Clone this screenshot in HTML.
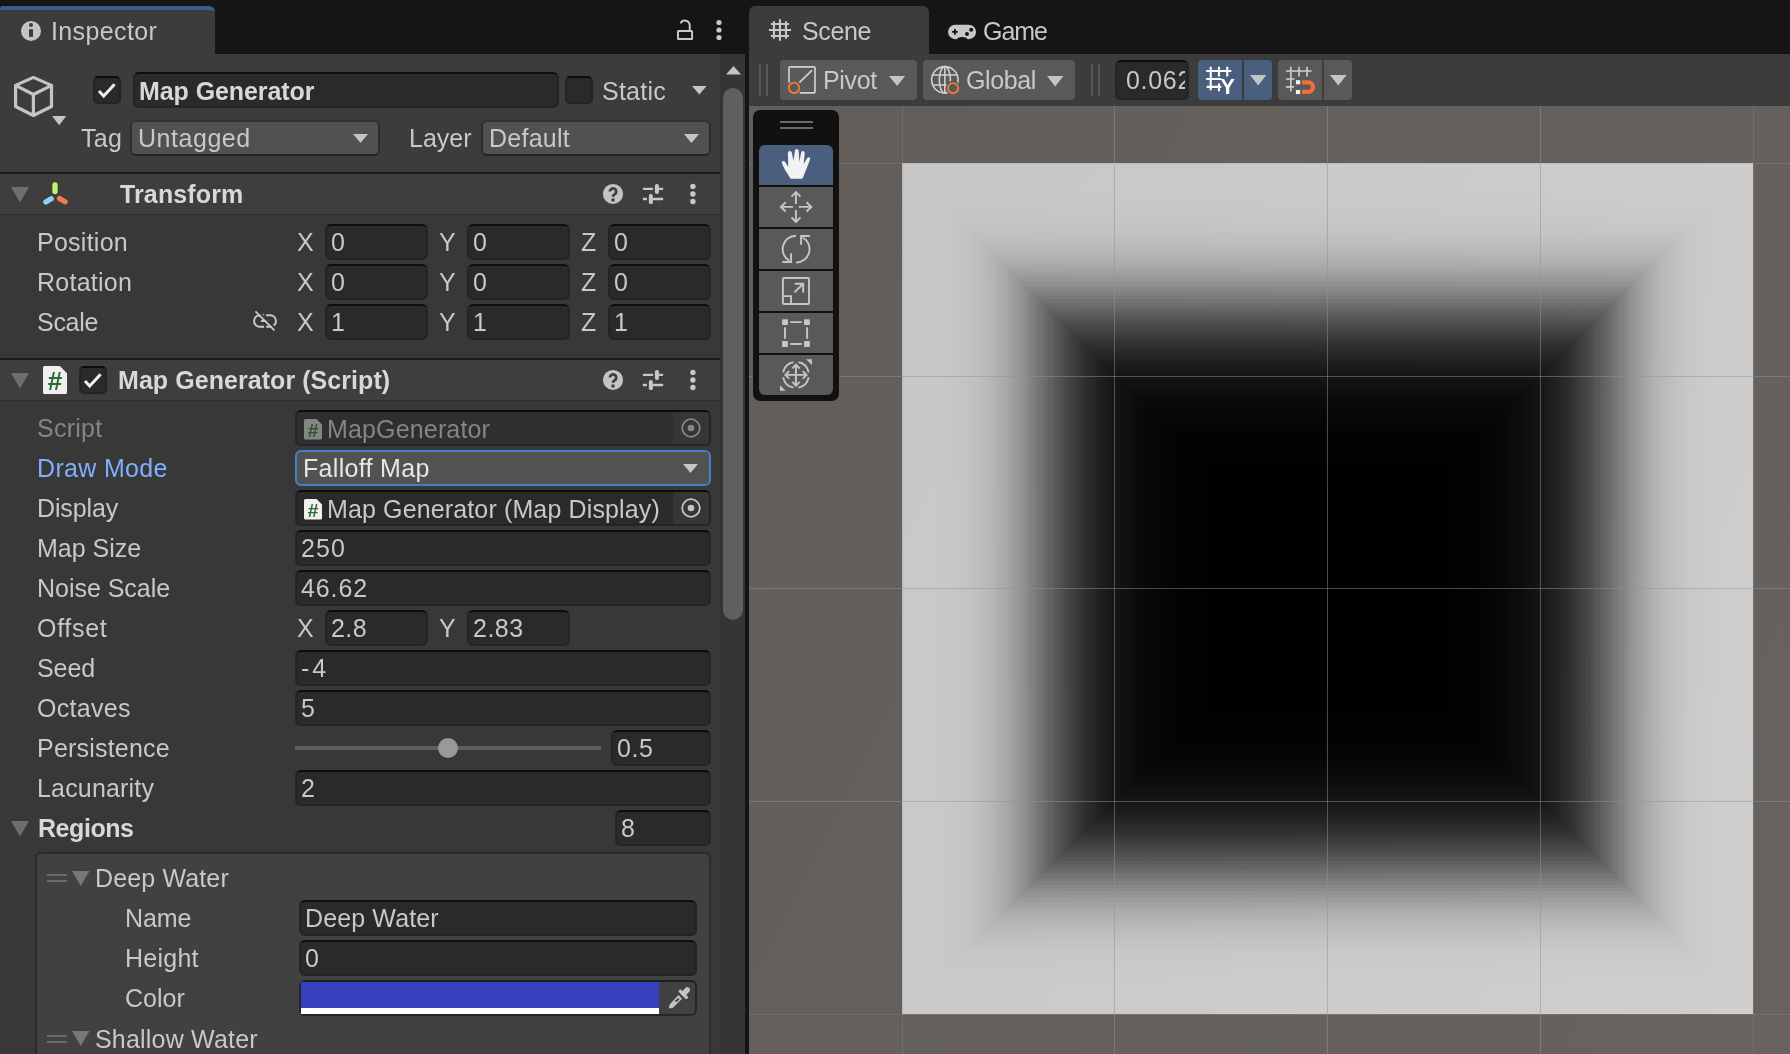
<!DOCTYPE html>
<html><head><meta charset="utf-8"><title>Unity</title>
<style>
html,body{margin:0;padding:0;background:#151515;width:1790px;height:1054px;overflow:hidden;}
body{width:1790px;height:1054px;position:relative;overflow:hidden;font-family:"Liberation Sans",sans-serif;}
div,span,svg{position:absolute;box-sizing:border-box;}
.t{white-space:nowrap;line-height:30px;height:30px;}
.f{border:2px solid #242424;border-top-color:#0d0d0d;}
.dd{background:#515151;border:2px solid #2d2d2d;border-top-color:#323232;border-bottom-color:#242424;border-radius:6px;}
.a{overflow:visible;}
#w{left:0;top:0;width:1790px;height:1054px;will-change:transform;overflow:hidden;}
</style></head><body><div id="w">
<div class="" style="left:0px;top:6px;width:215px;height:48px;background:#3c3c3c;border-radius:3px 6px 0 0;"></div>
<div style="left:0;top:6px;width:215px;height:10px;border-radius:3px 6px 0 0;border-top:4px solid #3b5f8d;"></div>
<div class="" style="left:0px;top:54px;width:745px;height:1000px;background:#383838;"></div>
<div class="" style="left:0px;top:54px;width:720px;height:118px;background:#3c3c3c;"></div>
<svg class="a" style="left:21px;top:21px" width="20" height="20" viewBox="0 0 20 20"><circle cx="10" cy="10" r="10" fill="#c4c4c4"/><rect x="8" y="8.2" width="4" height="7.7" fill="#3c3c3c"/><circle cx="10" cy="3.9" r="2" fill="#3c3c3c"/></svg>
<span class="t" style="left:51px;top:16px;font-size:25px;color:#c8c8c8;font-weight:400;letter-spacing:0.385px;">Inspector</span>
<svg class="a" style="left:660px;top:10px" width="80" height="40" viewBox="0 0 1790.0 895.0"><g fill="none" stroke="#c8c8c8" stroke-width="44"><path d="M665 455 V345 A108 108 0 0 0 459 300"/><rect x="402" y="472" width="316" height="178" rx="14"/></g><g fill="#c8c8c8"><circle cx="1320" cy="280" r="58"/><circle cx="1320" cy="448" r="58"/><circle cx="1320" cy="615" r="58"/></g></svg>
<div class="" style="left:720px;top:54px;width:25px;height:1000px;background:#353535;"></div>
<svg class="a" style="left:725.5px;top:65.5px" width="15" height="8.5" viewBox="0 0 15 8.5"><polygon points="0,8.5 7.5,0 15,8.5" fill="#c4c4c4"/></svg>
<div class="" style="left:723px;top:88px;width:20px;height:532px;background:#5f5f5f;border-radius:10px;"></div>
<svg class="a" style="left:0px;top:60px" width="70" height="70" viewBox="0 0 70 70"><path d="M33.4 17.4 L51.5 25.4 V46.5 L33.4 55.5 L15.6 46.5 V25.4 Z M15.6 25.4 L33.4 34.5 L51.5 25.4 M33.4 34.5 V55.5" fill="none" stroke="#c4c4c4" stroke-width="3.2" stroke-linejoin="round"/></svg>
<svg class="a" style="left:51.7px;top:115.8px" width="14.3" height="9.2" viewBox="0 0 14.3 9.2"><polygon points="0,0 14.3,0 7.15,9.2" fill="#c4c4c4"/></svg>
<div class="f" style="left:93px;top:76px;width:28px;height:28px;background:#2a2a2a;border-radius:5px"></div>
<svg class="a" style="left:93px;top:76px" width="28" height="28" viewBox="0 0 28 28"><path d="M6 14.9 L10.7 20 L21.6 8.3" fill="none" stroke="#efefef" stroke-width="3"/></svg>
<div class="f" style="left:133px;top:72px;width:426px;height:36px;background:#2a2a2a;border-radius:6px"></div>
<span class="t" style="left:139px;top:76px;font-size:25px;color:#d8d8d8;font-weight:700;letter-spacing:-0.079px;">Map Generator</span>
<div class="f" style="left:565px;top:76px;width:28px;height:28px;background:#2a2a2a;border-radius:5px"></div>
<span class="t" style="left:602px;top:76px;font-size:25px;color:#c8c8c8;font-weight:400;letter-spacing:0.247px;">Static</span>
<svg class="a" style="left:692px;top:86px" width="14.6" height="8.6" viewBox="0 0 14.6 8.6"><polygon points="0,0 14.6,0 7.3,8.6" fill="#c4c4c4"/></svg>
<span class="t" style="left:81px;top:123px;font-size:25px;color:#c8c8c8;font-weight:400;letter-spacing:0.352px;">Tag</span>
<div class="dd" style="left:130px;top:120px;width:250px;height:36px;"></div>
<svg class="a" style="left:353.0px;top:134.0px" width="15" height="9" viewBox="0 0 15 9"><polygon points="0,0 15,0 7.5,9" fill="#c4c4c4"/></svg>
<span class="t" style="left:138px;top:123px;font-size:25px;color:#c8c8c8;font-weight:400;letter-spacing:0.541px;">Untagged</span>
<span class="t" style="left:409px;top:123px;font-size:25px;color:#c8c8c8;font-weight:400;letter-spacing:-0.005px;">Layer</span>
<div class="dd" style="left:481px;top:120px;width:230px;height:36px;"></div>
<svg class="a" style="left:684.0px;top:134.0px" width="15" height="9" viewBox="0 0 15 9"><polygon points="0,0 15,0 7.5,9" fill="#c4c4c4"/></svg>
<span class="t" style="left:489px;top:123px;font-size:25px;color:#c8c8c8;font-weight:400;letter-spacing:0.262px;">Default</span>
<div class="" style="left:0px;top:172px;width:720px;height:2px;background:#1a1a1a;"></div>
<div class="" style="left:0px;top:174px;width:720px;height:40px;background:#3e3e3e;"></div>
<div class="" style="left:0px;top:214px;width:720px;height:1px;background:#2f2f2f;"></div>
<svg class="a" style="left:11px;top:186.5px" width="18" height="15.5" viewBox="0 0 18 15.5"><polygon points="0,0 18,0 9.0,15.5" fill="#6e6e6e"/></svg>
<svg class="a" style="left:590px;top:174px" width="120" height="40" viewBox="0 0 1790.0 596.7"><circle cx="343" cy="298" r="150" fill="#c4c4c4"/><path d="M297 262 a47 47 0 1 1 73 39 c-19 13 -27 22 -27 40" fill="none" stroke="#3e3e3e" stroke-width="42"/><circle cx="343" cy="387" r="27" fill="#3e3e3e"/><g fill="#c8c8c8"><rect x="790" y="205" width="150" height="34" rx="6"/><rect x="1028" y="205" width="62" height="34" rx="6"/><rect x="968" y="150" width="60" height="148" rx="28"/><rect x="790" y="356" width="60" height="34" rx="6"/><rect x="938" y="356" width="152" height="34" rx="6"/><rect x="878" y="300" width="60" height="148" rx="28"/><circle cx="1535" cy="185" r="40"/><circle cx="1535" cy="298" r="40"/><circle cx="1535" cy="410" r="40"/></g></svg>
<svg class="a" style="left:0px;top:170px" width="100" height="50" viewBox="0 0 1790.0 895.0"><g stroke-linecap="round" fill="none"><path d="M985 265 V385" stroke="#bbf56a" stroke-width="95"/><path d="M820 572 L915 515" stroke="#8fd0fa" stroke-width="95"/><path d="M1065 512 L1165 568" stroke="#f07d4a" stroke-width="95"/></g></svg>
<span class="t" style="left:120px;top:179px;font-size:25px;color:#d8d8d8;font-weight:700;letter-spacing:0.125px;">Transform</span>
<span class="t" style="left:37px;top:227px;font-size:25px;color:#c8c8c8;font-weight:400;letter-spacing:0.255px;">Position</span>
<span class="t" style="left:297px;top:227px;font-size:25px;color:#c8c8c8;font-weight:400;letter-spacing:0.000px;">X</span>
<div class="f" style="left:325px;top:224px;width:103px;height:36px;background:#2a2a2a;border-radius:6px"></div>
<span class="t" style="left:331px;top:227px;font-size:25px;color:#c8c8c8;font-weight:400;letter-spacing:0.000px;">0</span>
<span class="t" style="left:439px;top:227px;font-size:25px;color:#c8c8c8;font-weight:400;letter-spacing:0.000px;">Y</span>
<div class="f" style="left:467px;top:224px;width:103px;height:36px;background:#2a2a2a;border-radius:6px"></div>
<span class="t" style="left:473px;top:227px;font-size:25px;color:#c8c8c8;font-weight:400;letter-spacing:0.000px;">0</span>
<span class="t" style="left:581px;top:227px;font-size:25px;color:#c8c8c8;font-weight:400;letter-spacing:0.000px;">Z</span>
<div class="f" style="left:608px;top:224px;width:103px;height:36px;background:#2a2a2a;border-radius:6px"></div>
<span class="t" style="left:614px;top:227px;font-size:25px;color:#c8c8c8;font-weight:400;letter-spacing:0.000px;">0</span>
<span class="t" style="left:37px;top:267px;font-size:25px;color:#c8c8c8;font-weight:400;letter-spacing:0.258px;">Rotation</span>
<span class="t" style="left:297px;top:267px;font-size:25px;color:#c8c8c8;font-weight:400;letter-spacing:0.000px;">X</span>
<div class="f" style="left:325px;top:264px;width:103px;height:36px;background:#2a2a2a;border-radius:6px"></div>
<span class="t" style="left:331px;top:267px;font-size:25px;color:#c8c8c8;font-weight:400;letter-spacing:0.000px;">0</span>
<span class="t" style="left:439px;top:267px;font-size:25px;color:#c8c8c8;font-weight:400;letter-spacing:0.000px;">Y</span>
<div class="f" style="left:467px;top:264px;width:103px;height:36px;background:#2a2a2a;border-radius:6px"></div>
<span class="t" style="left:473px;top:267px;font-size:25px;color:#c8c8c8;font-weight:400;letter-spacing:0.000px;">0</span>
<span class="t" style="left:581px;top:267px;font-size:25px;color:#c8c8c8;font-weight:400;letter-spacing:0.000px;">Z</span>
<div class="f" style="left:608px;top:264px;width:103px;height:36px;background:#2a2a2a;border-radius:6px"></div>
<span class="t" style="left:614px;top:267px;font-size:25px;color:#c8c8c8;font-weight:400;letter-spacing:0.000px;">0</span>
<span class="t" style="left:37px;top:307px;font-size:25px;color:#c8c8c8;font-weight:400;letter-spacing:-0.281px;">Scale</span>
<span class="t" style="left:297px;top:307px;font-size:25px;color:#c8c8c8;font-weight:400;letter-spacing:0.000px;">X</span>
<div class="f" style="left:325px;top:304px;width:103px;height:36px;background:#2a2a2a;border-radius:6px"></div>
<span class="t" style="left:331px;top:307px;font-size:25px;color:#c8c8c8;font-weight:400;letter-spacing:0.000px;">1</span>
<span class="t" style="left:439px;top:307px;font-size:25px;color:#c8c8c8;font-weight:400;letter-spacing:0.000px;">Y</span>
<div class="f" style="left:467px;top:304px;width:103px;height:36px;background:#2a2a2a;border-radius:6px"></div>
<span class="t" style="left:473px;top:307px;font-size:25px;color:#c8c8c8;font-weight:400;letter-spacing:0.000px;">1</span>
<span class="t" style="left:581px;top:307px;font-size:25px;color:#c8c8c8;font-weight:400;letter-spacing:0.000px;">Z</span>
<div class="f" style="left:608px;top:304px;width:103px;height:36px;background:#2a2a2a;border-radius:6px"></div>
<span class="t" style="left:614px;top:307px;font-size:25px;color:#c8c8c8;font-weight:400;letter-spacing:0.000px;">1</span>
<svg class="a" style="left:240px;top:300px" width="80" height="45" viewBox="0 0 1790.0 1006.9"><g fill="none" stroke="#c8c8c8" stroke-width="45"><path d="M540 340 H445 a130 130 0 0 0 0 260 H540"/><path d="M585 340 H675 a130 130 0 0 1 0 260 H585"/><path d="M470 470 H645"/></g><path d="M375 225 L800 650" stroke="#383838" stroke-width="44"/><path d="M345 255 L770 680" stroke="#c8c8c8" stroke-width="40"/></svg>
<div class="" style="left:0px;top:358px;width:720px;height:2px;background:#1a1a1a;"></div>
<div class="" style="left:0px;top:360px;width:720px;height:40px;background:#3e3e3e;"></div>
<div class="" style="left:0px;top:400px;width:720px;height:1px;background:#2f2f2f;"></div>
<svg class="a" style="left:11px;top:372.5px" width="18" height="15.5" viewBox="0 0 18 15.5"><polygon points="0,0 18,0 9.0,15.5" fill="#6e6e6e"/></svg>
<svg class="a" style="left:590px;top:360px" width="120" height="40" viewBox="0 0 1790.0 596.7"><circle cx="343" cy="298" r="150" fill="#c4c4c4"/><path d="M297 262 a47 47 0 1 1 73 39 c-19 13 -27 22 -27 40" fill="none" stroke="#3e3e3e" stroke-width="42"/><circle cx="343" cy="387" r="27" fill="#3e3e3e"/><g fill="#c8c8c8"><rect x="790" y="205" width="150" height="34" rx="6"/><rect x="1028" y="205" width="62" height="34" rx="6"/><rect x="968" y="150" width="60" height="148" rx="28"/><rect x="790" y="356" width="60" height="34" rx="6"/><rect x="938" y="356" width="152" height="34" rx="6"/><rect x="878" y="300" width="60" height="148" rx="28"/><circle cx="1535" cy="185" r="40"/><circle cx="1535" cy="298" r="40"/><circle cx="1535" cy="410" r="40"/></g></svg>
<svg class="a" style="left:43px;top:366px" width="24" height="28" viewBox="0 0 24 28"><path d="M1.5 0 H16.8 L24 7.199999999999999 V26.5 a1.5 1.5 0 0 1 -1.5 1.5 H1.5 a1.5 1.5 0 0 1 -1.5 -1.5 V1.5 a1.5 1.5 0 0 1 1.5 -1.5 Z" fill="#f0f0f0"/><text x="12.0" y="23.93" font-family="Liberation Sans" font-weight="700" font-size="26.0" text-anchor="middle" fill="#2d6b2d">#</text></svg>
<div class="f" style="left:79px;top:366px;width:28px;height:28px;background:#2a2a2a;border-radius:5px"></div>
<svg class="a" style="left:79px;top:366px" width="28" height="28" viewBox="0 0 28 28"><path d="M6 14.9 L10.7 20 L21.6 8.3" fill="none" stroke="#efefef" stroke-width="3"/></svg>
<span class="t" style="left:118px;top:365px;font-size:25px;color:#d8d8d8;font-weight:700;letter-spacing:0.060px;">Map Generator (Script)</span>
<span class="t" style="left:37px;top:413px;font-size:25px;color:#858585;font-weight:400;letter-spacing:0.256px;">Script</span>
<div class="f" style="left:295px;top:410px;width:416px;height:36px;background:#2f2f2f;border-radius:6px"></div>
<div class="" style="left:673px;top:412px;width:36px;height:32px;background:#363636;border-radius:0 4px 4px 0;"></div>
<svg class="a" style="left:304px;top:419px" width="18" height="20.5" viewBox="0 0 18 20.5"><path d="M1.5 0 H12.600000000000001 L18 5.3999999999999995 V19.0 a1.5 1.5 0 0 1 -1.5 1.5 H1.5 a1.5 1.5 0 0 1 -1.5 -1.5 V1.5 a1.5 1.5 0 0 1 1.5 -1.5 Z" fill="#858585"/><text x="9.0" y="17.52" font-family="Liberation Sans" font-weight="700" font-size="19.1" text-anchor="middle" fill="#2c532c">#</text></svg>
<span class="t" style="left:327px;top:414px;font-size:25px;color:#858585;font-weight:400;letter-spacing:0.156px;">MapGenerator</span>
<svg class="a" style="left:680.5px;top:418px" width="20" height="20" viewBox="0 0 20 20"><circle cx="10" cy="10" r="8.8" fill="none" stroke="#858585" stroke-width="1.8"/><circle cx="10" cy="10" r="3.3" fill="#858585"/></svg>
<span class="t" style="left:37px;top:453px;font-size:25px;color:#7fb0fb;font-weight:400;letter-spacing:0.324px;">Draw Mode</span>
<div class="dd" style="left:295px;top:450px;width:416px;height:36px;border:2px solid #467dca;border-radius:6px;background:#525252"></div>
<svg class="a" style="left:683px;top:463.5px" width="15" height="9" viewBox="0 0 15 9"><polygon points="0,0 15,0 7.5,9" fill="#c4c4c4"/></svg>
<span class="t" style="left:303px;top:453px;font-size:25px;color:#e6e6e6;font-weight:400;letter-spacing:0.314px;">Falloff Map</span>
<span class="t" style="left:37px;top:493px;font-size:25px;color:#c8c8c8;font-weight:400;letter-spacing:-0.137px;">Display</span>
<div class="f" style="left:295px;top:490px;width:416px;height:36px;background:#2a2a2a;border-radius:6px"></div>
<div class="" style="left:673px;top:492px;width:36px;height:32px;background:#363636;border-radius:0 4px 4px 0;"></div>
<svg class="a" style="left:304px;top:499px" width="18" height="20.5" viewBox="0 0 18 20.5"><path d="M1.5 0 H12.600000000000001 L18 5.3999999999999995 V19.0 a1.5 1.5 0 0 1 -1.5 1.5 H1.5 a1.5 1.5 0 0 1 -1.5 -1.5 V1.5 a1.5 1.5 0 0 1 1.5 -1.5 Z" fill="#f0f0f0"/><text x="9.0" y="17.52" font-family="Liberation Sans" font-weight="700" font-size="19.1" text-anchor="middle" fill="#2d6b2d">#</text></svg>
<span class="t" style="left:327px;top:494px;font-size:25px;color:#c8c8c8;font-weight:400;letter-spacing:0.133px;">Map Generator (Map Display)</span>
<svg class="a" style="left:680.5px;top:498px" width="20" height="20" viewBox="0 0 20 20"><circle cx="10" cy="10" r="8.8" fill="none" stroke="#c4c4c4" stroke-width="1.8"/><circle cx="10" cy="10" r="3.3" fill="#c4c4c4"/></svg>
<span class="t" style="left:37px;top:533px;font-size:25px;color:#c8c8c8;font-weight:400;letter-spacing:-0.000px;">Map Size</span>
<div class="f" style="left:295px;top:530px;width:416px;height:36px;background:#2a2a2a;border-radius:6px"></div>
<span class="t" style="left:301px;top:533px;font-size:25px;color:#c8c8c8;font-weight:400;letter-spacing:1.082px;">250</span>
<span class="t" style="left:37px;top:573px;font-size:25px;color:#c8c8c8;font-weight:400;letter-spacing:-0.029px;">Noise Scale</span>
<div class="f" style="left:295px;top:570px;width:416px;height:36px;background:#2a2a2a;border-radius:6px"></div>
<span class="t" style="left:301px;top:573px;font-size:25px;color:#c8c8c8;font-weight:400;letter-spacing:0.899px;">46.62</span>
<span class="t" style="left:37px;top:613px;font-size:25px;color:#c8c8c8;font-weight:400;letter-spacing:0.709px;">Offset</span>
<span class="t" style="left:297px;top:613px;font-size:25px;color:#c8c8c8;font-weight:400;letter-spacing:0.000px;">X</span>
<div class="f" style="left:325px;top:610px;width:103px;height:36px;background:#2a2a2a;border-radius:6px"></div>
<span class="t" style="left:331px;top:613px;font-size:25px;color:#c8c8c8;font-weight:400;letter-spacing:0.416px;">2.8</span>
<span class="t" style="left:439px;top:613px;font-size:25px;color:#c8c8c8;font-weight:400;letter-spacing:0.000px;">Y</span>
<div class="f" style="left:467px;top:610px;width:103px;height:36px;background:#2a2a2a;border-radius:6px"></div>
<span class="t" style="left:473px;top:613px;font-size:25px;color:#c8c8c8;font-weight:400;letter-spacing:0.480px;">2.83</span>
<span class="t" style="left:37px;top:653px;font-size:25px;color:#c8c8c8;font-weight:400;letter-spacing:-0.058px;">Seed</span>
<div class="f" style="left:295px;top:650px;width:416px;height:36px;background:#2a2a2a;border-radius:6px"></div>
<span class="t" style="left:301px;top:653px;font-size:25px;color:#c8c8c8;font-weight:400;letter-spacing:3.004px;">-4</span>
<span class="t" style="left:37px;top:693px;font-size:25px;color:#c8c8c8;font-weight:400;letter-spacing:0.301px;">Octaves</span>
<div class="f" style="left:295px;top:690px;width:416px;height:36px;background:#2a2a2a;border-radius:6px"></div>
<span class="t" style="left:301px;top:693px;font-size:25px;color:#c8c8c8;font-weight:400;letter-spacing:0.000px;">5</span>
<span class="t" style="left:37px;top:733px;font-size:25px;color:#c8c8c8;font-weight:400;letter-spacing:0.210px;">Persistence</span>
<div class="" style="left:295px;top:746px;width:306px;height:4px;background:#5e5e5e;"></div>
<div class="" style="left:437.5px;top:738px;width:20px;height:20px;background:#999;border-radius:10px;"></div>
<div class="f" style="left:611px;top:730px;width:100px;height:36px;background:#2a2a2a;border-radius:6px"></div>
<span class="t" style="left:617px;top:733px;font-size:25px;color:#c8c8c8;font-weight:400;letter-spacing:0.598px;">0.5</span>
<span class="t" style="left:37px;top:773px;font-size:25px;color:#c8c8c8;font-weight:400;letter-spacing:0.178px;">Lacunarity</span>
<div class="f" style="left:295px;top:770px;width:416px;height:36px;background:#2a2a2a;border-radius:6px"></div>
<span class="t" style="left:301px;top:773px;font-size:25px;color:#c8c8c8;font-weight:400;letter-spacing:0.000px;">2</span>
<svg class="a" style="left:11px;top:820.5px" width="18" height="15.5" viewBox="0 0 18 15.5"><polygon points="0,0 18,0 9.0,15.5" fill="#6e6e6e"/></svg>
<span class="t" style="left:38px;top:813px;font-size:25px;color:#d8d8d8;font-weight:700;letter-spacing:-0.433px;">Regions</span>
<div class="f" style="left:615px;top:810px;width:96px;height:36px;background:#2a2a2a;border-radius:6px"></div>
<span class="t" style="left:621px;top:813px;font-size:25px;color:#c8c8c8;font-weight:400;letter-spacing:0.000px;">8</span>
<div class="" style="left:35px;top:852px;width:676px;height:220px;background:#414141;border:2px solid #2a2a2a;border-radius:6px;"></div>
<div class="" style="left:47px;top:874px;width:20px;height:2px;background:#6a6a6a;"></div>
<div class="" style="left:47px;top:880px;width:20px;height:2px;background:#6a6a6a;"></div>
<svg class="a" style="left:71.5px;top:870.5px" width="17.5" height="15" viewBox="0 0 17.5 15"><polygon points="0,0 17.5,0 8.75,15" fill="#787878"/></svg>
<span class="t" style="left:95px;top:863px;font-size:25px;color:#c8c8c8;font-weight:400;letter-spacing:0.140px;">Deep Water</span>
<span class="t" style="left:125px;top:903px;font-size:25px;color:#c8c8c8;font-weight:400;letter-spacing:-0.125px;">Name</span>
<div class="f" style="left:299px;top:900px;width:398px;height:36px;background:#2a2a2a;border-radius:6px"></div>
<span class="t" style="left:305px;top:903px;font-size:25px;color:#c8c8c8;font-weight:400;letter-spacing:0.128px;">Deep Water</span>
<span class="t" style="left:125px;top:943px;font-size:25px;color:#c8c8c8;font-weight:400;letter-spacing:0.243px;">Height</span>
<div class="f" style="left:299px;top:940px;width:398px;height:36px;background:#2a2a2a;border-radius:6px"></div>
<span class="t" style="left:305px;top:943px;font-size:25px;color:#c8c8c8;font-weight:400;letter-spacing:0.000px;">0</span>
<span class="t" style="left:125px;top:983px;font-size:25px;color:#c8c8c8;font-weight:400;letter-spacing:-0.006px;">Color</span>
<div class="" style="left:299px;top:980px;width:398px;height:36px;background:#414141;border:2px solid #262626;border-top-color:#1e1e1e;border-radius:6px;"></div>
<div class="" style="left:301px;top:982px;width:358px;height:26px;background:#363fbc;"></div>
<div class="" style="left:301px;top:1007.8px;width:358px;height:6.2px;background:#ffffff;"></div>
<svg class="a" style="left:650px;top:975px" width="60" height="45" viewBox="0 0 1405.2 1053.9"><path d="M447 778 Q440 720 470 680 L665 470 L750 555 L545 760 Q500 790 447 778 Z" fill="#c4c4c4"/><path d="M655 540 L692 562 L640 626 L570 620 Z" fill="#414141"/><path d="M708 378 L852 522" stroke="#c4c4c4" stroke-width="76" stroke-linecap="round" fill="none"/><path d="M795 435 L872 348" stroke="#c4c4c4" stroke-width="125" stroke-linecap="round" fill="none"/></svg>
<div class="" style="left:47px;top:1034.5px;width:20px;height:2px;background:#6a6a6a;"></div>
<div class="" style="left:47px;top:1040.5px;width:20px;height:2px;background:#6a6a6a;"></div>
<svg class="a" style="left:71.5px;top:1031.0px" width="17.5" height="15" viewBox="0 0 17.5 15"><polygon points="0,0 17.5,0 8.75,15" fill="#787878"/></svg>
<span class="t" style="left:95px;top:1024px;font-size:25px;color:#c8c8c8;font-weight:400;letter-spacing:0.198px;">Shallow Water</span>
<div class="" style="left:745px;top:0px;width:4px;height:1054px;background:#151515;"></div>
<div class="" style="left:749px;top:6px;width:180px;height:48px;background:#3c3c3c;border-radius:6px 6px 0 0;"></div>
<svg class="a" style="left:760px;top:10px" width="100" height="40" viewBox="0 0 1790.0 716.0"><path d="M250 200 V515 M357 165 V550 M465 200 V515 M195 250 H520 M160 357 H555 M195 465 H520" stroke="#c8c8c8" stroke-width="38" fill="none"/></svg>
<span class="t" style="left:802px;top:16px;font-size:25px;color:#c8c8c8;font-weight:400;letter-spacing:-0.369px;">Scene</span>
<svg class="a" style="left:935px;top:10px" width="120" height="40" viewBox="0 0 1790.0 596.7"><rect x="195" y="220" width="417" height="215" rx="107" fill="#c8c8c8"/><ellipse cx="405" cy="443" rx="82" ry="42" fill="#151515"/><path d="M255 327 H340 M297 285 V370" stroke="#151515" stroke-width="28" fill="none"/><circle cx="540" cy="295" r="30" fill="#151515"/><circle cx="477" cy="357" r="30" fill="#151515"/></svg>
<span class="t" style="left:983px;top:16px;font-size:25px;color:#c8c8c8;font-weight:400;letter-spacing:-1.023px;">Game</span>
<div class="" style="left:749px;top:54px;width:1041px;height:52px;background:#3c3c3c;"></div>
<div class="" style="left:759px;top:64px;width:2px;height:32px;background:#585858;"></div>
<div class="" style="left:766px;top:64px;width:2px;height:32px;background:#585858;"></div>
<div class="" style="left:780px;top:60px;width:137px;height:40px;background:#595959;border-radius:4px;"></div>
<svg class="a" style="left:776px;top:56px" width="50" height="48" viewBox="0 0 596.6 572.8"><g fill="none" stroke="#d0d0d0" stroke-width="20" stroke-linecap="round"><path d="M155 310 V142 a12 12 0 0 1 12 -12 H453 a12 12 0 0 1 12 12 V428 a12 12 0 0 1 -12 12 H290"/><path d="M285 312 L425 175"/></g><circle cx="215" cy="380" r="62" fill="none" stroke="#f5793b" stroke-width="22"/></svg>
<span class="t" style="left:823px;top:65px;font-size:25px;color:#c8c8c8;font-weight:400;letter-spacing:-0.324px;">Pivot</span>
<svg class="a" style="left:889px;top:75.5px" width="16.2" height="10" viewBox="0 0 16.2 10"><polygon points="0,0 16.2,0 8.1,10" fill="#c4c4c4"/></svg>
<div class="" style="left:923px;top:60px;width:152px;height:40px;background:#595959;border-radius:4px;"></div>
<svg class="a" style="left:920px;top:56px" width="50" height="48" viewBox="0 0 559.4 537.0"><g fill="none" stroke="#d0d0d0" stroke-width="18"><circle cx="278" cy="267" r="148"/><ellipse cx="278" cy="267" rx="62" ry="148"/><path d="M140 212 H416 M140 325 H416 M278 119 V415"/></g><circle cx="370" cy="360" r="82" fill="#595959"/><circle cx="370" cy="360" r="57" fill="none" stroke="#f5793b" stroke-width="21"/></svg>
<span class="t" style="left:966px;top:65px;font-size:25px;color:#c8c8c8;font-weight:400;letter-spacing:-0.399px;">Global</span>
<svg class="a" style="left:1046.8px;top:75.5px" width="16.4" height="10.4" viewBox="0 0 16.4 10.4"><polygon points="0,0 16.4,0 8.2,10.4" fill="#c4c4c4"/></svg>
<div class="" style="left:1091px;top:64px;width:2px;height:32px;background:#585858;"></div>
<div class="" style="left:1098px;top:64px;width:2px;height:32px;background:#585858;"></div>
<div class="f" style="left:1115px;top:60px;width:74px;height:40px;background:#2a2a2a;border-radius:6px"></div>
<span class="t" style="left:1126px;top:65px;font-size:25px;color:#c8c8c8;font-weight:400;letter-spacing:0.700px;width:58.5px;overflow:hidden;">0.062</span>
<div class="" style="left:1198px;top:60px;width:44px;height:40px;background:#4a5f7e;border-radius:4px 0 0 4px;"></div>
<div class="" style="left:1244px;top:60px;width:28px;height:40px;background:#4a5f7e;border-radius:0 4px 4px 0;"></div>
<div class="" style="left:1278px;top:60px;width:44px;height:40px;background:#595959;border-radius:4px 0 0 4px;"></div>
<div class="" style="left:1324px;top:60px;width:28px;height:40px;background:#595959;border-radius:0 4px 4px 0;"></div>
<svg class="a" style="left:1190px;top:56px" width="170" height="48" viewBox="0 0 1789.9 505.4"><g stroke="#ffffff" stroke-width="22" fill="none"><path d="M218 112 V360 M305 112 V215 M392 112 V215 M170 158 H435 M170 242 H330 M175 325 H330 M305 290 V372"/></g><text x="397" y="400" font-family="Liberation Sans" font-weight="700" font-size="232" text-anchor="middle" fill="#ffffff">Y</text><g stroke="#cfcfcf" stroke-width="17" fill="none"><path d="M1062 112 V375 M1148 112 V215 M1232 112 V215 M1010 158 H1280 M1010 242 H1100 M1010 325 H1095"/></g><path d="M1180 277 H1245 a50 50 0 0 1 0 100 H1180" fill="none" stroke="#f0703a" stroke-width="45"/><rect x="1115" y="255" width="45" height="43" fill="#f4f4f4"/><rect x="1115" y="358" width="45" height="43" fill="#f4f4f4"/></svg>
<svg class="a" style="left:1249.8px;top:75.2px" width="16.4" height="10.4" viewBox="0 0 16.4 10.4"><polygon points="0,0 16.4,0 8.2,10.4" fill="#c4c4c4"/></svg>
<svg class="a" style="left:1329.6px;top:75.2px" width="16.6" height="10.4" viewBox="0 0 16.6 10.4"><polygon points="0,0 16.6,0 8.3,10.4" fill="#c4c4c4"/></svg>
<div class="" style="left:749px;top:106px;width:1041px;height:948px;background:#67625e;"></div>
<svg style="left:902.4px;top:163.2px" width="851.0" height="851.0" viewBox="0 0 851.0 851.0" shape-rendering="crispEdges"><defs>
<linearGradient id="gt" gradientUnits="userSpaceOnUse" x1="0" y1="425.5" x2="0" y2="0"><stop offset="0.0000" stop-color="rgb(0,0,0)"/><stop offset="0.2320" stop-color="rgb(0,0,0)"/><stop offset="0.2320" stop-color="rgb(1,1,1)"/><stop offset="0.2960" stop-color="rgb(1,1,1)"/><stop offset="0.2960" stop-color="rgb(2,2,2)"/><stop offset="0.3360" stop-color="rgb(2,2,2)"/><stop offset="0.3360" stop-color="rgb(3,3,3)"/><stop offset="0.3600" stop-color="rgb(3,3,3)"/><stop offset="0.3600" stop-color="rgb(4,4,4)"/><stop offset="0.3760" stop-color="rgb(4,4,4)"/><stop offset="0.3760" stop-color="rgb(5,5,5)"/><stop offset="0.3920" stop-color="rgb(5,5,5)"/><stop offset="0.3920" stop-color="rgb(6,6,6)"/><stop offset="0.4000" stop-color="rgb(6,6,6)"/><stop offset="0.4000" stop-color="rgb(7,7,7)"/><stop offset="0.4160" stop-color="rgb(7,7,7)"/><stop offset="0.4160" stop-color="rgb(8,8,8)"/><stop offset="0.4240" stop-color="rgb(8,8,8)"/><stop offset="0.4240" stop-color="rgb(9,9,9)"/><stop offset="0.4320" stop-color="rgb(9,9,9)"/><stop offset="0.4320" stop-color="rgb(10,10,10)"/><stop offset="0.4400" stop-color="rgb(10,10,10)"/><stop offset="0.4400" stop-color="rgb(11,11,11)"/><stop offset="0.4480" stop-color="rgb(11,11,11)"/><stop offset="0.4480" stop-color="rgb(12,12,12)"/><stop offset="0.4560" stop-color="rgb(12,12,12)"/><stop offset="0.4560" stop-color="rgb(14,14,14)"/><stop offset="0.4640" stop-color="rgb(14,14,14)"/><stop offset="0.4640" stop-color="rgb(15,15,15)"/><stop offset="0.4720" stop-color="rgb(15,15,15)"/><stop offset="0.4720" stop-color="rgb(17,17,17)"/><stop offset="0.4800" stop-color="rgb(17,17,17)"/><stop offset="0.4800" stop-color="rgb(18,18,18)"/><stop offset="0.4880" stop-color="rgb(18,18,18)"/><stop offset="0.4880" stop-color="rgb(20,20,20)"/><stop offset="0.4960" stop-color="rgb(20,20,20)"/><stop offset="0.4960" stop-color="rgb(22,22,22)"/><stop offset="0.5040" stop-color="rgb(22,22,22)"/><stop offset="0.5040" stop-color="rgb(24,24,24)"/><stop offset="0.5120" stop-color="rgb(24,24,24)"/><stop offset="0.5120" stop-color="rgb(27,27,27)"/><stop offset="0.5200" stop-color="rgb(27,27,27)"/><stop offset="0.5200" stop-color="rgb(29,29,29)"/><stop offset="0.5280" stop-color="rgb(29,29,29)"/><stop offset="0.5280" stop-color="rgb(32,32,32)"/><stop offset="0.5360" stop-color="rgb(32,32,32)"/><stop offset="0.5360" stop-color="rgb(35,35,35)"/><stop offset="0.5440" stop-color="rgb(35,35,35)"/><stop offset="0.5440" stop-color="rgb(38,38,38)"/><stop offset="0.5520" stop-color="rgb(38,38,38)"/><stop offset="0.5520" stop-color="rgb(42,42,42)"/><stop offset="0.5600" stop-color="rgb(42,42,42)"/><stop offset="0.5600" stop-color="rgb(45,45,45)"/><stop offset="0.5680" stop-color="rgb(45,45,45)"/><stop offset="0.5680" stop-color="rgb(49,49,49)"/><stop offset="0.5760" stop-color="rgb(49,49,49)"/><stop offset="0.5760" stop-color="rgb(54,54,54)"/><stop offset="0.5840" stop-color="rgb(54,54,54)"/><stop offset="0.5840" stop-color="rgb(58,58,58)"/><stop offset="0.5920" stop-color="rgb(58,58,58)"/><stop offset="0.5920" stop-color="rgb(63,63,63)"/><stop offset="0.6000" stop-color="rgb(63,63,63)"/><stop offset="0.6000" stop-color="rgb(68,68,68)"/><stop offset="0.6080" stop-color="rgb(68,68,68)"/><stop offset="0.6080" stop-color="rgb(73,73,73)"/><stop offset="0.6160" stop-color="rgb(73,73,73)"/><stop offset="0.6160" stop-color="rgb(78,78,78)"/><stop offset="0.6240" stop-color="rgb(78,78,78)"/><stop offset="0.6240" stop-color="rgb(84,84,84)"/><stop offset="0.6320" stop-color="rgb(84,84,84)"/><stop offset="0.6320" stop-color="rgb(89,89,89)"/><stop offset="0.6400" stop-color="rgb(89,89,89)"/><stop offset="0.6400" stop-color="rgb(95,95,95)"/><stop offset="0.6480" stop-color="rgb(95,95,95)"/><stop offset="0.6480" stop-color="rgb(101,101,101)"/><stop offset="0.6560" stop-color="rgb(101,101,101)"/><stop offset="0.6560" stop-color="rgb(107,107,107)"/><stop offset="0.6640" stop-color="rgb(107,107,107)"/><stop offset="0.6640" stop-color="rgb(113,113,113)"/><stop offset="0.6720" stop-color="rgb(113,113,113)"/><stop offset="0.6720" stop-color="rgb(119,119,119)"/><stop offset="0.6800" stop-color="rgb(119,119,119)"/><stop offset="0.6800" stop-color="rgb(125,125,125)"/><stop offset="0.6880" stop-color="rgb(125,125,125)"/><stop offset="0.6880" stop-color="rgb(131,131,131)"/><stop offset="0.6960" stop-color="rgb(131,131,131)"/><stop offset="0.6960" stop-color="rgb(137,137,137)"/><stop offset="0.7040" stop-color="rgb(137,137,137)"/><stop offset="0.7040" stop-color="rgb(143,143,143)"/><stop offset="0.7120" stop-color="rgb(143,143,143)"/><stop offset="0.7120" stop-color="rgb(149,149,149)"/><stop offset="0.7200" stop-color="rgb(149,149,149)"/><stop offset="0.7200" stop-color="rgb(154,154,154)"/><stop offset="0.7280" stop-color="rgb(154,154,154)"/><stop offset="0.7280" stop-color="rgb(159,159,159)"/><stop offset="0.7360" stop-color="rgb(159,159,159)"/><stop offset="0.7360" stop-color="rgb(164,164,164)"/><stop offset="0.7440" stop-color="rgb(164,164,164)"/><stop offset="0.7440" stop-color="rgb(168,168,168)"/><stop offset="0.7520" stop-color="rgb(168,168,168)"/><stop offset="0.7520" stop-color="rgb(173,173,173)"/><stop offset="0.7600" stop-color="rgb(173,173,173)"/><stop offset="0.7600" stop-color="rgb(177,177,177)"/><stop offset="0.7680" stop-color="rgb(177,177,177)"/><stop offset="0.7680" stop-color="rgb(180,180,180)"/><stop offset="0.7760" stop-color="rgb(180,180,180)"/><stop offset="0.7760" stop-color="rgb(184,184,184)"/><stop offset="0.7840" stop-color="rgb(184,184,184)"/><stop offset="0.7840" stop-color="rgb(187,187,187)"/><stop offset="0.7920" stop-color="rgb(187,187,187)"/><stop offset="0.7920" stop-color="rgb(189,189,189)"/><stop offset="0.8000" stop-color="rgb(189,189,189)"/><stop offset="0.8000" stop-color="rgb(192,192,192)"/><stop offset="0.8080" stop-color="rgb(192,192,192)"/><stop offset="0.8080" stop-color="rgb(194,194,194)"/><stop offset="0.8160" stop-color="rgb(194,194,194)"/><stop offset="0.8160" stop-color="rgb(196,196,196)"/><stop offset="0.8240" stop-color="rgb(196,196,196)"/><stop offset="0.8240" stop-color="rgb(198,198,198)"/><stop offset="0.8320" stop-color="rgb(198,198,198)"/><stop offset="0.8320" stop-color="rgb(199,199,199)"/><stop offset="0.8400" stop-color="rgb(199,199,199)"/><stop offset="0.8400" stop-color="rgb(201,201,201)"/><stop offset="0.8480" stop-color="rgb(201,201,201)"/><stop offset="0.8480" stop-color="rgb(202,202,202)"/><stop offset="0.8560" stop-color="rgb(202,202,202)"/><stop offset="0.8560" stop-color="rgb(203,203,203)"/><stop offset="0.8640" stop-color="rgb(203,203,203)"/><stop offset="0.8640" stop-color="rgb(204,204,204)"/><stop offset="0.8800" stop-color="rgb(204,204,204)"/><stop offset="0.8800" stop-color="rgb(205,205,205)"/><stop offset="0.8960" stop-color="rgb(205,205,205)"/><stop offset="0.8960" stop-color="rgb(206,206,206)"/><stop offset="0.9200" stop-color="rgb(206,206,206)"/><stop offset="0.9200" stop-color="rgb(207,207,207)"/><stop offset="1" stop-color="rgb(207,207,207)"/></linearGradient>
<linearGradient id="gb" href="#gt" x1="0" y1="425.5" x2="0" y2="851.0"/>
<linearGradient id="gl" href="#gt" x1="425.5" y1="0" x2="0" y2="0"/>
<linearGradient id="gr" href="#gt" x1="425.5" y1="0" x2="851.0" y2="0"/>
</defs>
<rect width="851.0" height="851.0" fill="#000"/>
<polygon points="0,0 851.0,0 425.5,425.5" fill="url(#gt)"/>
<polygon points="0,851.0 851.0,851.0 425.5,425.5" fill="url(#gb)"/>
<polygon points="0,0 0,851.0 425.5,425.5" fill="url(#gl)"/>
<polygon points="851.0,0 851.0,851.0 425.5,425.5" fill="url(#gr)"/></svg>
<div class="" style="left:749px;top:106px;width:1041px;height:948px;background:transparent;background:linear-gradient(117deg,rgba(0,0,0,0.042) 0%,rgba(0,0,0,0) 100%);"></div>
<div class="" style="left:1114px;top:106px;width:1px;height:948px;background:rgba(145,145,145,0.5);"></div>
<div class="" style="left:1327px;top:106px;width:1px;height:948px;background:rgba(145,145,145,0.5);"></div>
<div class="" style="left:1540px;top:106px;width:1px;height:948px;background:rgba(145,145,145,0.5);"></div>
<div class="" style="left:749px;top:376px;width:1041px;height:1px;background:rgba(145,145,145,0.5);"></div>
<div class="" style="left:749px;top:588px;width:1041px;height:1px;background:rgba(145,145,145,0.5);"></div>
<div class="" style="left:749px;top:801px;width:1041px;height:1px;background:rgba(145,145,145,0.5);"></div>
<div class="" style="left:902px;top:106px;width:1px;height:948px;background:rgba(150,150,150,0.28);"></div>
<div class="" style="left:1753px;top:106px;width:1px;height:948px;background:rgba(150,150,150,0.28);"></div>
<div class="" style="left:749px;top:163px;width:1041px;height:1px;background:rgba(150,150,150,0.28);"></div>
<div class="" style="left:749px;top:1014px;width:1041px;height:1px;background:rgba(150,150,150,0.28);"></div>
<div class="" style="left:753px;top:110px;width:86px;height:291px;background:#131110;border-radius:7px;"></div>
<div class="" style="left:779.5px;top:121px;width:33px;height:2px;background:#6a6a6a;"></div>
<div class="" style="left:779.5px;top:127px;width:33px;height:2px;background:#6a6a6a;"></div>
<div class="" style="left:759px;top:145px;width:74px;height:40px;background:#4a5f7e;border-radius:6px 6px 0 0;"></div>
<div class="" style="left:759px;top:187px;width:74px;height:40px;background:#595959;"></div>
<div class="" style="left:759px;top:229px;width:74px;height:40px;background:#595959;"></div>
<div class="" style="left:759px;top:271px;width:74px;height:40px;background:#595959;"></div>
<div class="" style="left:759px;top:313px;width:74px;height:40px;background:#595959;"></div>
<div class="" style="left:759px;top:355px;width:74px;height:40px;background:#595959;border-radius:0 0 6px 6px;"></div>
<svg class="a" style="left:756px;top:142px" width="80" height="88" viewBox="0 0 958.0 1053.8"><path d="M415 440 L345 330 L312 258 Q303 232 328 228 Q345 230 353 245 L386 296 L382 132 Q384 108 405 107 Q426 109 429 130 L449 226 L466 106 Q468 84 488 83 Q509 84 511 106 L519 236 L541 126 Q548 104 566 109 Q586 117 583 136 L571 262 L612 196 Q625 177 641 186 Q652 196 646 213 L600 332 L555 440 Z" fill="#f2f2f2"/><g fill="none" stroke="#c6c6c6" stroke-width="23"><path d="M478 600 V742 M478 813 V958 M298 777 H442 M513 777 H662"/><path d="M425 655 L478 600 L532 655 M425 903 L478 958 L532 903 M355 722 L298 777 L355 832 M605 722 L662 777 L605 832"/></g></svg>
<svg class="a" style="left:756px;top:226px" width="80" height="88" viewBox="0 0 958.0 1053.8"><g fill="none" stroke="#c6c6c6" stroke-width="23"><path d="M478 117 A160 160 0 0 0 400 416"/><path d="M420 325 V432 H315"/><path d="M480 437 A160 160 0 0 0 560 138"/><path d="M540 225 V120 H645"/><rect x="322" y="622" width="313" height="313" rx="14"/><path d="M322 840 H420 V935"/><path d="M460 795 L565 692 M465 692 H565 V795"/></g></svg>
<svg class="a" style="left:756px;top:310px" width="80" height="88" viewBox="0 0 958.0 1053.8"><g fill="#c6c6c6"><rect x="312" y="110" width="70" height="70" rx="10"/><rect x="575" y="110" width="70" height="70" rx="10"/><rect x="312" y="372" width="70" height="70" rx="10"/><rect x="575" y="372" width="70" height="70" rx="10"/><path d="M600 590 H670 V658 Z M288 900 V968 H355 Z"/></g><g fill="none" stroke="#c6c6c6" stroke-width="23"><path d="M410 145 H548 M410 407 H548 M347 208 V345 M612 208 V345"/><path d="M630.2 806.6 A155 155 0 0 1 507.6 929.2 M448.4 929.2 A155 155 0 0 1 325.8 806.6 M325.8 747.4 A155 155 0 0 1 448.4 624.8 M507.6 624.8 A155 155 0 0 1 630.2 747.4 "/><path d="M478 655 V905 M352 777 H606"/><path d="M435 700 L478 655 L522 700 M435 860 L478 905 L522 860 M397 733 L352 777 L397 822 M561 733 L606 777 L561 822"/></g></svg>
</div></body></html>
